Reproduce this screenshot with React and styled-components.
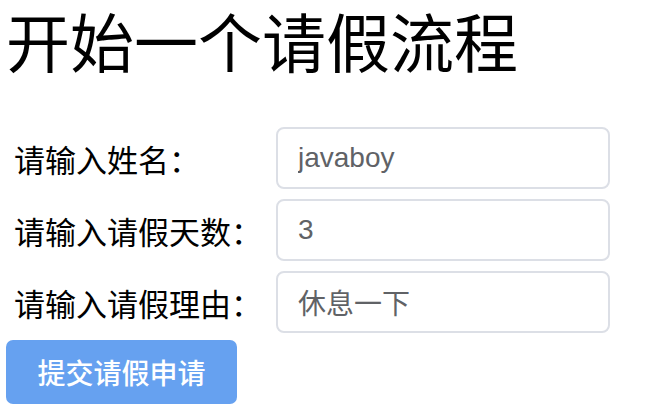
import React from 'react';
import styled, { createGlobalStyle } from 'styled-components';

const GlobalStyle = createGlobalStyle`
  body {
    margin: 0;
    background: #fff;
    font-family: "Noto Sans CJK SC", "Liberation Sans", sans-serif;
  }
`;

const StyledPage = styled.div`
  padding: 3px 0 0 6px;
`;

const Title = styled.h1`
  margin: 0 0 52px 0;
  font-size: 64px;
  line-height: 72px;
  font-weight: 400;
  color: #000;
  font-family: "Noto Sans CJK SC", serif;
`;

const StyledForm = styled.form`
  display: grid;
  grid-template-columns: 270px 334px;
  row-gap: 10px;
  align-items: center;
`;

const Label = styled.label`
  padding-left: 8px;
  font-size: 31px;
  color: #000;
  font-family: "Noto Sans CJK SC", serif;
`;

const Input = styled.input`
  box-sizing: border-box;
  width: 334px;
  height: 62px;
  padding: 0 20px;
  border: 2px solid #dcdfe6;
  border-radius: 8px;
  font-size: 28px;
  color: #606266;
  font-family: "Liberation Sans", "Noto Sans CJK SC", sans-serif;
  outline: none;
  background: #fff;
`;

const SubmitBtn = styled.button`
  grid-column: 1 / 2;
  margin-top: -3px;
  width: 231px;
  height: 64px;
  border: none;
  border-radius: 7px;
  background: #66a1f0;
  color: #fff;
  font-size: 28px;
  font-weight: 500;
  font-family: "Noto Sans CJK SC", sans-serif;
  cursor: pointer;
`;

const fields = [
  { name: 'name', label: '请输入姓名：', value: 'javaboy' },
  { name: 'days', label: '请输入请假天数：', value: '3' },
  { name: 'reason', label: '请输入请假理由：', value: '休息一下' },
];

function App() {
  const submitHandler = (event) => {
    event.preventDefault();
  };

  return (
    <StyledPage>
      <GlobalStyle />
      <Title>开始一个请假流程</Title>
      <StyledForm onSubmit={submitHandler}>
        {fields.map((f) => (
          <React.Fragment key={f.name}>
            <Label htmlFor={f.name}>{f.label}</Label>
            <Input id={f.name} name={f.name} defaultValue={f.value} />
          </React.Fragment>
        ))}
        <SubmitBtn type='submit'>提交请假申请</SubmitBtn>
      </StyledForm>
    </StyledPage>
  );
}

export default App;
